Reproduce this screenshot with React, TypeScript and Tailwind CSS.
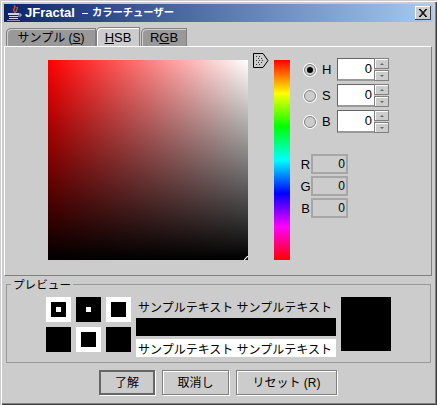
const FONT = '[font-family:"Liberation_Sans","Noto_Sans_CJK_JP",sans-serif]';

const RAISED =
  'bg-[#cccccc] border border-[#808080] shadow-[inset_1px_1px_0_#ffffff]';

function JavaIcon() {
  return (
    <svg width="16" height="17" viewBox="0 0 16 17" className="shrink-0">
      <path d="M8 0 C11 3 6 4 8 6 C9 7 10 8 8 9" stroke="#e0402a" strokeWidth="1.6" fill="none" />
      <path d="M11 2 C12 4 10 5 10 7" stroke="#e88a40" strokeWidth="1" fill="none" />
      <path d="M2 8 H13 V10 H2 Z M3 11 H12 V12 H3 Z M3 13 H12 V14 H3 Z" fill="#d0d0e8" />
      <path d="M13 9 H15 V11 H12" stroke="#c0c0e0" strokeWidth="1" fill="none" />
      <path d="M1 15 H14 V16 H1 Z" fill="#9090c0" />
    </svg>
  );
}

function Spinner({ label, checked }: { label: string; checked?: boolean }) {
  return (
    <div className="flex items-center h-[23px]">
      <div className="w-[12px] h-[12px] rounded-full border border-[#808080] bg-[#cccccc] shadow-[0_0_0_1px_#ffffff] flex items-center justify-center">
        {checked && <div className="w-[6px] h-[6px] rounded-full bg-black" />}
      </div>
      <span className="w-[20px] pl-[6px] text-[13px] leading-none">{label}</span>
      <div className="ml-[1px] w-[37px] h-[23px] bg-white border-t border-l border-[#666666] border-b-2 border-b-[#999999] flex items-center justify-end pr-[2px] text-[13px]">
        0
      </div>
      <div className="flex flex-col w-[15px] h-[23px] gap-[1px]">
        <div className={`${RAISED} flex-1 flex items-center justify-center`}>
          <div className="w-0 h-0 border-x-2 border-x-transparent border-b-2 border-b-[#666666]" />
        </div>
        <div className={`${RAISED} flex-1 flex items-center justify-center`}>
          <div className="w-0 h-0 border-x-2 border-x-transparent border-t-2 border-t-[#666666]" />
        </div>
      </div>
    </div>
  );
}

function Readout({ label }: { label: string }) {
  return (
    <div className="flex items-center h-[20px]">
      <span className="w-[11px] text-[13px] leading-none text-center">{label}</span>
      <div className="w-[37px] h-[20px] ml-0 border-2 border-[#a6a6a6] flex items-center justify-end pr-[1px] text-[12px]">
        0
      </div>
    </div>
  );
}

function Swatch({ outer, middle, dot }: { outer: string; middle?: string; dot?: boolean }) {
  return (
    <div className={`w-[25px] h-[25px] flex items-center justify-center ${outer}`}>
      {middle && (
        <div className={`flex items-center justify-center ${middle}`}>
          {dot && <div className="w-[5px] h-[5px] bg-white" />}
        </div>
      )}
    </div>
  );
}

function Button({ children, primary, width }: { children: React.ReactNode; primary?: boolean; width: string }) {
  return (
    <div
      className={`${width} h-[25px] flex items-center justify-center text-[12px] ${
        primary
          ? 'border-2 border-[#666666] shadow-[1px_1px_0_#ffffff]'
          : 'border border-[#808080] shadow-[1px_1px_0_#ffffff,inset_1px_1px_0_#ffffff]'
      }`}
    >
      {children}
    </div>
  );
}

export default function App() {
  return (
    <div
      className={`${FONT} w-[437px] h-[405px] overflow-hidden bg-[#cccccc] text-black p-[4px] pb-[2px] shadow-[inset_1px_1px_0_#cccccc,inset_2px_2px_0_#ffffff,inset_-1px_-1px_0_#404040,inset_-2px_-2px_0_#808080]`}
    >
      {/* title bar */}
      <div className="h-[18px] w-[429px] flex items-center pl-[2px] pr-[2px] bg-[linear-gradient(to_right,#0a246a,#a6caf0)]">
        <JavaIcon />
        <span className="ml-[3px] text-[13px] font-bold text-white whitespace-nowrap">JFractal</span>
        <span className="ml-[7px] w-[6px] h-[1px] bg-white" />
        <span className="ml-[4px] text-[10.3px] font-bold text-white whitespace-nowrap">カラーチューザー</span>
        <div className="ml-auto w-[16px] h-[14px] bg-[#cccccc] border-r border-b border-[#404040] shadow-[inset_1px_1px_0_#ffffff] flex items-center justify-center">
          <svg width="9" height="8" viewBox="0 0 9 8">
            <path d="M1 0 L8 8 M2 0 L9 8 M8 0 L1 8 M9 0 L2 8" stroke="#000000" strokeWidth="1" />
          </svg>
        </div>
      </div>

      {/* tabs */}
      <div className="flex items-end h-[19px] mt-[5px] pl-[2px] text-[13px] leading-none">
        <div className="w-[90px] h-[18px] bg-[#999999] rounded-tl-[5px] border-t border-l border-r border-[#808080] shadow-[inset_1px_1px_0_#cfcfcf] flex items-center justify-center whitespace-nowrap text-[12px]">
          サンプル (<span className="underline">S</span>)
        </div>
        <div className="w-[44px] h-[19px] bg-[#cccccc] rounded-tl-[5px] border-t border-l border-r border-[#808080] shadow-[inset_1px_1px_0_#ffffff] flex items-center justify-center relative z-10">
          <span className="underline">H</span>SB
        </div>
        <div className="ml-[1px] w-[46px] h-[18px] bg-[#999999] rounded-tl-[5px] border-t border-l border-r border-[#808080] shadow-[inset_1px_1px_0_#cfcfcf] flex items-center justify-center">
          R<span className="underline">G</span>B
        </div>
      </div>

      {/* chooser panel */}
      <div className="w-[428px] h-[230px] border-t border-l border-t-white border-l-white border-r border-b border-r-[#808080] border-b-[#808080] flex pl-[43px] pt-[13px]">
        <div className="relative w-[200px] h-[200px] shrink-0 bg-[linear-gradient(to_bottom,transparent,#000000),linear-gradient(to_right,#ff0000,#ffffff)]">
          <svg width="4" height="4" viewBox="0 0 4 4" className="absolute right-0 bottom-0">
            <path d="M0 4 L4 0" stroke="#ffffff" strokeWidth="1.2" />
          </svg>
        </div>
        <div className="w-[26px] shrink-0 pl-[5px] -mt-[7px]">
          <svg width="16" height="15" viewBox="0 0 16 15">
            <path d="M0.5 0.5 H10 L15 7.5 L10 14.5 H0.5 Z" fill="#cccccc" stroke="#000000" />
            <path d="M3 3h1v1H3z M6 3h1v1H6z M5 5h1v1H5z M8 5h1v1H8z M3 7h1v1H3z M6 7h1v1H6z M9 7h1v1H9z M5 9h1v1H5z M8 9h1v1H8z M3 11h1v1H3z M6 11h1v1H6z" fill="#333333" />
          </svg>
        </div>
        <div className="w-[16px] h-[200px] shrink-0 bg-[linear-gradient(to_bottom,#ff0000,#ffff00,#00ff00,#00ffff,#0000ff,#ff00ff,#ff0000)]" />
        <div className="ml-[14px] -mt-[2px] flex flex-col">
          <div className="flex flex-col gap-[3px]">
            <Spinner label="H" checked />
            <Spinner label="S" />
            <Spinner label="B" />
          </div>
          <div className="mt-[21px] ml-[-4px] pl-[0px] flex flex-col gap-[2px]">
            <Readout label="R" />
            <Readout label="G" />
            <Readout label="B" />
          </div>
        </div>
      </div>

      {/* preview group */}
      <div className="relative w-[425px] h-[79px] mt-[8px] ml-[2px] border border-[#999999] flex pl-[39px] pt-[12px]">
        <span className="absolute left-[4px] -top-[7px] bg-[#cccccc] px-[2px] text-[11.6px] leading-[14px]">プレビュー</span>
        <div className="grid grid-cols-[25px_25px_25px] grid-rows-[25px_25px] gap-x-[5px] gap-y-[5px] h-[55px]">
          <Swatch outer="bg-white" middle="w-[15px] h-[15px] bg-black" dot />
          <Swatch outer="bg-black" middle="w-[15px] h-[15px] bg-black" dot />
          <Swatch outer="bg-white" middle="w-[15px] h-[15px] bg-black" />
          <Swatch outer="bg-black" />
          <Swatch outer="bg-white" middle="w-[15px] h-[15px] bg-black" />
          <Swatch outer="bg-black" />
        </div>
        <div className="ml-[5px] w-[200px] flex flex-col">
          <div className="h-[21px] text-[12px] leading-[23px] pl-[2px] whitespace-nowrap">サンプルテキスト サンプルテキスト</div>
          <div className="h-[18px] bg-black" />
          <div className="mt-[3px] h-[18px] bg-white text-[12px] leading-[22px] pl-[2px] whitespace-nowrap overflow-hidden">サンプルテキスト サンプルテキスト</div>
        </div>
        <div className="ml-[5px] w-[50px] h-[54px] bg-black" />
      </div>

      {/* buttons */}
      <div className="flex mt-[7px] ml-[95px] gap-[7px]">
        <Button primary width="w-[56px]">了解</Button>
        <Button width="w-[67px]">取消し</Button>
        <Button width="w-[101px]">リセット (R)</Button>
      </div>
    </div>
  );
}
